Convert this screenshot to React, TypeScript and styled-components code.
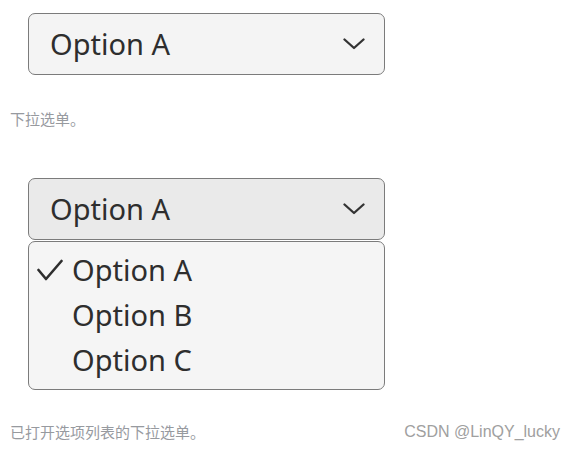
import React from "react";
import styled, { createGlobalStyle } from "styled-components";

const Global = createGlobalStyle`
  html, body { margin: 0; padding: 0; background: #ffffff; }
  body { font-family: "Noto Sans", "Noto Sans CJK SC", sans-serif; }
`;

const Page = styled.div`
  display: flex;
  flex-direction: column;
  padding-top: 13px;
  width: 571px;
`;

const Select = styled.div<{ $open?: boolean }>`
  margin-left: 28px;
  width: 357px;
  height: 62px;
  box-sizing: border-box;
  border: 1px solid #7b7b7b;
  border-radius: 7px;
  background: ${(p) => (p.$open ? "#eaeaea" : "#f4f4f4")};
  display: flex;
  align-items: center;
  justify-content: space-between;
  padding: 0 19px 0 21px;
  color: #2e2e2e;
  font-size: 29px;
  line-height: 1.362;
`;

const Caption = styled.div<{ $mt: number; $mb?: number }>`
  margin-top: ${(p) => p.$mt}px;
  margin-bottom: ${(p) => p.$mb ?? 0}px;
  padding-left: 10px;
  font-family: "Noto Sans CJK SC", sans-serif;
  font-size: 15px;
  line-height: 20px;
  color: #979a9f;
`;

const FooterRow = styled.div`
  display: flex;
  justify-content: space-between;
  align-items: center;
  margin-top: 32px;
  padding-right: 11px;
`;

const Watermark = styled.div`
  font-family: "Liberation Sans", "Noto Sans CJK SC", sans-serif;
  font-size: 16px;
  line-height: 20px;
  color: #a0a0a0;
`;

const List = styled.div`
  margin-left: 28px;
  margin-top: 1px;
  width: 357px;
  height: 149px;
  box-sizing: border-box;
  border: 1px solid #7b7b7b;
  border-radius: 7px;
  background: #f5f5f5;
  padding-top: 5px;
  display: flex;
  flex-direction: column;
`;

const Option = styled.div`
  display: flex;
  align-items: center;
  height: 45px;
  padding-left: 8px;
  gap: 9px;
  color: #2e2e2e;
  font-size: 29px;
  line-height: 45px;
`;

const CheckSlot = styled.span`
  width: 26px;
  height: 24px;
  display: flex;
  align-items: center;
  justify-content: center;
`;

const Chevron = () => (
  <svg width="22" height="12" viewBox="0 0 22 12">
    <path d="M1.5 1.5 L11 10 L20.5 1.5" fill="none" stroke="#333" strokeWidth="2.3" strokeLinecap="round" strokeLinejoin="round" />
  </svg>
);

const Check = () => (
  <svg width="26" height="24" viewBox="0 0 26 24">
    <path d="M1.5 12 L9 21 L24.5 3" fill="none" stroke="#2e2e2e" strokeWidth="2.6" strokeLinecap="round" strokeLinejoin="round" />
  </svg>
);

export default function App() {
  const options = ["Option A", "Option B", "Option C"];
  return (
    <>
      <Global />
      <Page>
        <Select>
          <span>Option A</span>
          <Chevron />
        </Select>
        <Caption $mt={34} $mb={49}>下拉选单。</Caption>
        <Select $open>
          <span>Option A</span>
          <Chevron />
        </Select>
        <List>
          {options.map((o, i) => (
            <Option key={o}>
              <CheckSlot>{i === 0 ? <Check /> : null}</CheckSlot>
              <span>{o}</span>
            </Option>
          ))}
        </List>
        <FooterRow>
          <Caption $mt={0}>已打开选项列表的下拉选单。</Caption>
          <Watermark>CSDN @LinQY_lucky</Watermark>
        </FooterRow>
      </Page>
    </>
  );
}
